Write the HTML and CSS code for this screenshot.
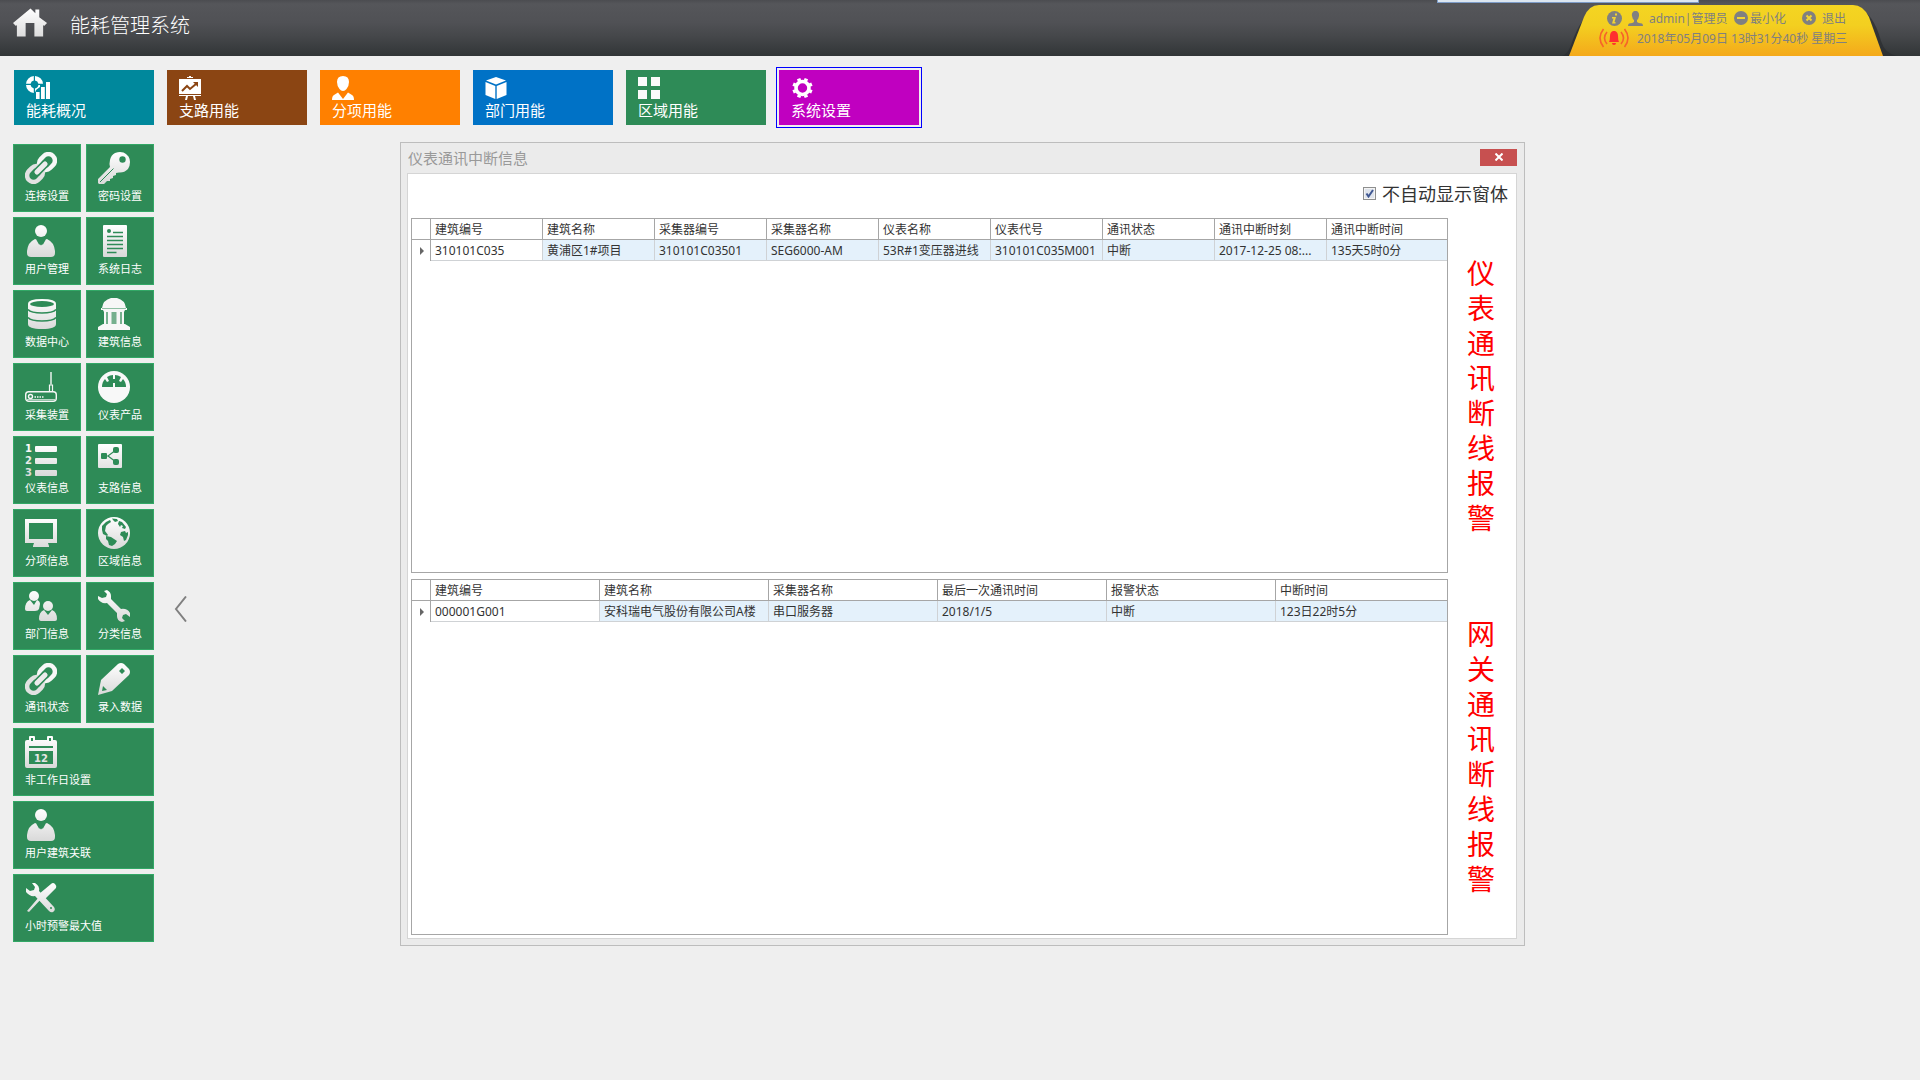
FILE: index.html
```
<!DOCTYPE html>
<html lang="zh-CN">
<head>
    <meta charset="UTF-8">
    <meta name="viewport" content="width=device-width, initial-scale=1.0">
    <title>能耗管理系统</title>
    <link rel="stylesheet" href="styles.css">
</head>
<body>
    <!-- shared gradient for the icons -->
    <svg class="defs" width="0" height="0" aria-hidden="true">
        <defs>
            <linearGradient id="silver" gradientUnits="userSpaceOnUse" x1="0" y1="0" x2="0" y2="32">
                <stop offset="0" stop-color="#ffffff"/>
                <stop offset="1" stop-color="#d9d9d9"/>
            </linearGradient>
            <symbol id="link" viewBox="0 0 32 32">
                <g transform="rotate(-45 16 16)" fill="none">
                    <rect x="16" y="9.500" width="17" height="13" rx="6.500" stroke="#f7f7f7" stroke-width="4.500"/>
                    <rect x="-1" y="9.500" width="17" height="13" rx="6.500" stroke="#e2e2e2" stroke-width="4.500"/>
                    <rect x="7" y="12.700" width="18" height="6.600" rx="3.300" fill="#ececec" stroke="#2e8b57" stroke-width="1.500"/>
                </g>
            </symbol>
            <symbol id="user" viewBox="0 0 32 32">
                <circle cx="16" cy="6" r="6"/>
                <path d="M10 14Q3 17 2 26V28Q2 32 6 32H26Q30 32 30 28V26Q29 17 22 14Q20.500 14 20 16L18 19.500H17L16 20.500L15 19.500H14L12 16Q11.500 14 10 14Z"/>
            </symbol>
        </defs>
    </svg>

    <header class="topbar">
        <svg class="home" viewBox="0 0 36 30" fill="url(#silver)">
            <path d="M18 0L23 5V1H27V9L35 15L32 18L31 17V29H22V15H13V29H4V17L3 18L0 15Z"/>
        </svg>
        <h1>能耗管理系统</h1>
        <div class="top-strip"></div>
        <div class="status">
            <svg class="status-bg" viewBox="0 0 335 51" preserveAspectRatio="none">
                <defs>
                    <linearGradient id="gold" x1="0" y1="0" x2="0" y2="1">
                        <stop offset="0" stop-color="#f4d522"/>
                        <stop offset="0.4" stop-color="#f3cf20"/>
                        <stop offset="1" stop-color="#f4a91b"/>
                    </linearGradient>
                </defs>
                <path fill="#2b2e30" opacity="0.75" d="M0 51Q6 49 9 40Q19 10 36 2H293Q311 6 319 36Q323 49 335 51Z"/>
                <path fill="url(#gold)" d="M7 51L22 12Q27 0 37 0H291Q301 0 307 12L321 51Z"/>
            </svg>
            <div class="status-row">
                <a href="#" class="user-link">
                    <svg width="15" height="15" viewBox="0 0 15 15"><circle cx="7.500" cy="7.500" r="7.500" fill="#808080"/><path d="M8 2.500H10V4.500H8ZM5 6H9L7.500 11H8.500V12.500H5L6.500 7.500H5Z" fill="#f2d433"/></svg>
                    <svg width="15" height="15" viewBox="0 0 15 15" fill="#808080"><path d="M7.500 0C10 0 11.500 2 11 5Q10.500 8 9 9V11Q10 12 14 12.500Q15 13 15 15H0Q0 13 1 12.500Q5 12 6 11V9Q4.500 8 4 5C3.500 2 5 0 7.500 0Z"/></svg>
                    <span>admin|管理员</span>
                </a>
                <button type="button" class="status-btn">
                    <svg width="14" height="14" viewBox="0 0 14 14"><circle cx="7" cy="7" r="7" fill="#808080"/><rect x="3" y="6" width="8" height="2" fill="#f2d433"/></svg>
                    <span>最小化</span>
                </button>
                <button type="button" class="status-btn exit">
                    <svg width="14" height="14" viewBox="0 0 14 14"><circle cx="7" cy="7" r="7" fill="#808080"/><path d="M4.500 4.500L9.500 9.500M9.500 4.500L4.500 9.500" stroke="#f2d433" stroke-width="2"/></svg>
                    <span>退出</span>
                </button>
            </div>
            <div class="status-row clock">
                <svg width="30" height="20" viewBox="0 0 30 20" fill="none" stroke="#f7622b" stroke-width="1.600">
                    <path d="M8 4Q3 10 8 16M4.500 1Q-2.500 10 4.500 19M22 4Q27 10 22 16M25.500 1Q32.500 10 25.500 19"/>
                    <path stroke="none" fill="#ff2f2f" d="M14 3H16Q19 4 19 8Q19 12 20 14H10Q11 12 11 8Q11 4 14 3ZM13 15H17Q17 17 15 17Q13 17 13 15Z"/>
                </svg>
                <span>2018年05月09日 13时31分40秒 星期三</span>
            </div>
        </div>
    </header>

    <nav class="modules">
        <button type="button" class="module teal">
            <svg viewBox="0 0 24 24" fill="#fff"><path d="M7.800 0A8.300 8.300 0 0 0 0 7.800H4.600A4 4 0 0 1 7.800 4.600ZM9 0A8.300 8.300 0 0 1 17 7.800H12.400A4 4 0 0 0 9 4.600ZM0 9A8.300 8.300 0 0 0 7.800 17V12.400A4 4 0 0 1 4.600 9ZM12.400 9H14V11L10 14L9 16.500V12.400A4 4 0 0 0 12.400 9Z"/><rect x="10" y="16" width="3.600" height="7"/><rect x="15" y="11" width="3.800" height="12"/><rect x="20" y="6" width="4" height="17"/></svg>
            <span>能耗概况</span>
        </button>
        <button type="button" class="module brown">
            <svg viewBox="0 0 24 24" fill="#fff"><path d="M10 0H12V1H14V2H8V1H10ZM0 3H22V18H0ZM0 19H22V20H0ZM7 20H9L8 24H6ZM14 20H16L17 24H15Z"/><path d="M3 15L8 10L11 13L17 8" fill="none" stroke="#8b4513" stroke-width="2"/><path d="M14 6H19V11Z" fill="#8b4513"/></svg>
            <span>支路用能</span>
        </button>
        <button type="button" class="module orange">
            <svg viewBox="0 0 24 24" fill="#fff"><path d="M11 0Q17 0 17 6Q17 10 14.500 13Q13 15 11 15Q9 15 7.500 13Q5 10 5 6Q5 0 11 0ZM0 24Q0 20 2 19L6 16.500L11 23L16 16.500L20 19Q22 20 22 24Z"/></svg>
            <span>分项用能</span>
        </button>
        <button type="button" class="module blue">
            <svg viewBox="0 0 24 24" fill="#fff"><path d="M11 1L21 4.500L11 8.500L1 4.500ZM0.500 6L10.300 10V23L0.500 19ZM21.500 6L11.700 10V23L21.500 19Z"/></svg>
            <span>部门用能</span>
        </button>
        <button type="button" class="module green">
            <svg viewBox="0 0 24 24" fill="#fafafa"><path d="M0 1H9V10H0ZM13 1H22V10H13ZM0 14H9V23H0ZM13 14H22V23H13Z"/></svg>
            <span>区域用能</span>
        </button>
        <button type="button" class="module purple active">
            <svg viewBox="0 0 24 24"><circle cx="11.500" cy="12" r="6.500" fill="none" stroke="#fff" stroke-width="3.600"/><path d="M14.400 5L15.400 2.600M18.500 9.100L20.900 8.100M18.500 14.900L20.900 15.900M14.400 19L15.400 21.400M8.600 19L7.600 21.400M4.500 14.900L2.100 15.900M4.500 9.100L2.100 8.100M8.600 5L7.600 2.600" stroke="#fff" stroke-width="3.600"/></svg>
            <span>系统设置</span>
        </button>
    </nav>

    <main class="workspace">
        <aside class="sidebar">
            <button type="button" class="tile">
                <svg viewBox="0 0 32 32"><use href="#link"/></svg>
                <span>连接设置</span>
            </button>
            <button type="button" class="tile">
                <svg viewBox="0 0 32 32"><path fill="url(#silver)" d="M17 1Q20 0 22 0Q26 0 28 2L30.500 4.500Q32 7 32 10Q32 14 30 17Q26 21 21 20.500L18 21V23L15 24V26L12 27V29H9L6 32H1L0 31V27L12 15Q11 12 12 8Q13 3 17 1Z"/><circle cx="24.500" cy="7.500" r="3.200" fill="#2e8b57"/><path d="M2 30L15.500 16.500" stroke="#2e8b57"/></svg>
                <span>密码设置</span>
            </button>
            <button type="button" class="tile">
                <svg viewBox="0 0 32 32" fill="url(#silver)"><use href="#user"/></svg>
                <span>用户管理</span>
            </button>
            <button type="button" class="tile">
                <svg viewBox="0 0 32 32"><rect x="5" width="24" height="32" rx="1" fill="url(#silver)"/><circle cx="11" cy="6" r="2" fill="#2e8b57"/><path d="M15 7.500H25M9 11.500H25M9 15.500H25M9 19.500H25M9 23.500H25M9 27.500H18.500" stroke="#2e8b57" stroke-width="1.600"/></svg>
                <span>系统日志</span>
            </button>
            <button type="button" class="tile">
                <svg viewBox="0 0 32 32"><path fill="url(#silver)" d="M3 6Q3 1 17 1Q31 1 31 6V26Q31 31 17 31Q3 31 3 26Z"/><ellipse cx="17" cy="6" rx="12" ry="3" fill="#2e8b57"/><path d="M3 11.500Q6 15 17 15Q28 15 31 11.500M3 19.500Q6 23 17 23Q28 23 31 19.500" fill="none" stroke="#2e8b57" stroke-width="1.600"/></svg>
                <span>数据中心</span>
            </button>
            <button type="button" class="tile">
                <svg viewBox="0 0 32 32" fill="#f7f7f7"><path d="M4 10Q5 2 13 0H19Q27 2 28 10ZM3 10H29V12H3ZM5 12H27L26 14V26H27L32 29V32H0V29L5 26H6V14Z"/><path d="M4 10.500H28" stroke="#8fc0a4"/><path fill="#76b08e" d="M8 14H10V26H8ZM13.500 14H18.500V26H13.500ZM22 14H24V26H22Z"/></svg>
                <span>建筑信息</span>
            </button>
            <button type="button" class="tile">
                <svg viewBox="0 0 32 32" fill="none" stroke="#f7f7f7"><rect x="0.700" y="20.700" width="30.600" height="9.600" rx="3" stroke-width="1.400"/><path d="M1 28.500H31" stroke="#b9d8c6"/><circle cx="5.500" cy="25.500" r="2" stroke-width="1.400"/><path d="M9.500 26H18.500" stroke-width="1.600" stroke-dasharray="1.500 1"/><path d="M24.500 20V14H27.500V20" stroke-width="1.200"/><path d="M26 1V14" stroke="#b9d8c6" stroke-width="2"/></svg>
                <span>采集装置</span>
            </button>
            <button type="button" class="tile">
                <svg viewBox="0 0 32 32"><circle cx="16" cy="16" r="16" fill="#f8f8f8"/><path fill="#2e8b57" d="M4 16Q4 11 7 8L9 11L11 10L9 6Q12 4 15 4V8H17V4Q20 4 23 6L21 10L23 11L25 8Q28 11 28 16H17V12H15V16Z"/></svg>
                <span>仪表产品</span>
            </button>
            <button type="button" class="tile">
                <svg viewBox="0 0 32 32" fill="url(#silver)"><rect x="10" y="2" width="22" height="6" rx="1"/><rect x="10" y="14" width="22" height="6" rx="1"/><rect x="10" y="26" width="22" height="6" rx="1"/><text class="digits" x="0" y="8">1</text><text class="digits" x="0" y="20">2</text><text class="digits" x="0" y="32">3</text></svg>
                <span>仪表信息</span>
            </button>
            <button type="button" class="tile">
                <svg viewBox="0 0 32 32"><rect width="24" height="24" rx="1" fill="url(#silver)"/><path d="M6 12H10L18 6M10 12L18 18" fill="none" stroke="#2e8b57" stroke-width="1.200"/><g fill="#2e8b57"><rect x="3" y="9" width="6" height="6" rx="1"/><rect x="15" y="3" width="6" height="6" rx="2"/><rect x="15" y="15" width="6" height="6" rx="2"/></g></svg>
                <span>支路信息</span>
            </button>
            <button type="button" class="tile">
                <svg viewBox="0 0 32 32" fill="url(#silver)"><path fill-rule="evenodd" d="M0 2H32V26H23L24 29V30H8V29L9 26H0ZM4 6V22H28V6Z"/></svg>
                <span>分项信息</span>
            </button>
            <button type="button" class="tile">
                <svg viewBox="0 0 32 32"><circle cx="16" cy="16" r="16" fill="url(#silver)"/><path fill="#2e8b57" d="M14 1.500L19 2L20 4L17 5L15 3ZM4 9L8 5L12 3L13 5L10 7L8 9L7 14L10 18L9 19L5 17L4 13ZM21 4L24 5L28 10L27 12L24 11L25 9L23 8L22 10L20 7ZM8 19L13 20L19 24L17 27L14 29L11 28L10 24L8 22ZM23 15L27 14L28 16L30 15V18L28 23L26 24L25 20L22 18Z"/></svg>
                <span>区域信息</span>
            </button>
            <button type="button" class="tile">
                <svg viewBox="0 0 32 32" fill="url(#silver)"><circle cx="9" cy="6" r="5"/><path d="M5 10L9 15L12 10Q15 11 15 14L14 19Q13 21 10 21H2Q0 21 0 19Q0 12 5 10Z"/><circle cx="23" cy="16" r="5"/><path d="M19 20L23 25L27 20Q32 22 32 29Q32 31 30 31H16Q14 31 14 29Q14 22 19 20Z"/></svg>
                <span>部门信息</span>
            </button>
            <button type="button" class="tile">
                <svg viewBox="0 0 32 32" fill="url(#silver)"><path d="M6 1L9 0Q13 2 13 6V9L23 19Q29 18 32 23V27L28 24L25 25L24 28L27 31L24 32Q19 31 19 26V23L9 13Q3 14 0 9V6L4 8L8 7L9 4Z"/></svg>
                <span>分类信息</span>
            </button>
            <button type="button" class="tile">
                <svg viewBox="0 0 32 32"><use href="#link"/></svg>
                <span>通讯状态</span>
            </button>
            <button type="button" class="tile">
                <svg viewBox="0 0 32 32"><path fill="url(#silver)" d="M20 1Q23 -1 26 1L31 6Q33 9 31 12L14 28L0 32L3 17Z"/><path fill="#2e8b57" d="M24 5L27 8L24 11L21 8ZM5 23L9 27L4 28Z"/></svg>
                <span>录入数据</span>
            </button>
            <button type="button" class="tile wide">
                <svg viewBox="0 0 32 32" fill="url(#silver)"><path fill-rule="evenodd" d="M4 1Q4 0 5 0H9Q10 0 10 1V4H22V1Q22 0 23 0H27Q28 0 28 1V4H30Q32 4 32 6V30Q32 32 30 32H2Q0 32 0 30V6Q0 4 2 4H4ZM6 2V5H8V2ZM24 2V5H26V2ZM4 15V28H28V15ZM4 10V12H28V10Z"/><text class="digits" x="9" y="26">12</text></svg>
                <span>非工作日设置</span>
            </button>
            <button type="button" class="tile wide">
                <svg viewBox="0 0 32 32" fill="url(#silver)"><use href="#user"/></svg>
                <span>用户建筑关联</span>
            </button>
            <button type="button" class="tile wide">
                <svg viewBox="0 0 32 32" fill="url(#silver)"><path d="M7 1H10Q15 4 14 9L29 25Q31 28 28 30Q26 31 24 29L10 14Q5 15 1 10V6L5 9L9 8L10 5Z"/><path d="M26 2Q28 0 30 2Q32 4 31 6L20 17L17 16L4 30L2 29L14 15V12Z"/><circle cx="26" cy="26" r="1" fill="#2e8b57"/></svg>
                <span>小时预警最大值</span>
            </button>
        </aside>

        <button type="button" class="collapse" aria-label="收起">
            <svg width="14" height="26" viewBox="0 0 14 26"><path d="M12 0.500L2 13L12 25.500" fill="none" stroke="#808080" stroke-width="2"/></svg>
        </button>

        <section class="dialog">
            <div class="dialog-title">
                <h2>仪表通讯中断信息</h2>
                <button type="button" class="close" aria-label="关闭">
                    <svg width="8" height="8" viewBox="0 0 8 8"><path d="M0.500 0.500L7.500 7.500M7.500 0.500L0.500 7.500" stroke="#fff" stroke-width="2"/></svg>
                </button>
            </div>
            <div class="dialog-body">
                <div class="toolbar">
                    <input type="checkbox" id="noPopup" checked>
                    <label for="noPopup">不自动显示窗体</label>
                </div>

                <div class="alarm">
                    <div class="grid">
                        <table class="meters">
                            <thead>
                                <tr><th class="mark"></th><th>建筑编号</th><th>建筑名称</th><th>采集器编号</th><th>采集器名称</th><th>仪表名称</th><th>仪表代号</th><th>通讯状态</th><th>通讯中断时刻</th><th class="last">通讯中断时间</th></tr>
                            </thead>
                            <tbody>
                                <tr><td class="mark"><i class="arrow"></i></td><td class="focus">310101C035</td><td>黄浦区1#项目</td><td>310101C03501</td><td>SEG6000-AM</td><td>53R#1变压器进线</td><td>310101C035M001</td><td>中断</td><td>2017-12-25 08:...</td><td>135天5时0分</td></tr>
                            </tbody>
                        </table>
                    </div>
                    <p class="alarm-name">仪表通讯断线报警</p>
                </div>

                <div class="alarm">
                    <div class="grid">
                        <table class="gateways">
                            <thead>
                                <tr><th class="mark"></th><th>建筑编号</th><th>建筑名称</th><th>采集器名称</th><th>最后一次通讯时间</th><th>报警状态</th><th class="last">中断时间</th></tr>
                            </thead>
                            <tbody>
                                <tr><td class="mark"><i class="arrow"></i></td><td class="focus">000001G001</td><td>安科瑞电气股份有限公司A楼</td><td>串口服务器</td><td>2018/1/5</td><td>中断</td><td>123日22时5分</td></tr>
                            </tbody>
                        </table>
                    </div>
                    <p class="alarm-name">网关通讯断线报警</p>
                </div>
            </div>
        </section>
    </main>
</body>
</html>
```
FILE: styles.css
```
* {
    box-sizing: border-box;
}
body {
    margin: 0;
    background-color: #efefef;
    color: #333;
    font-family: "Noto Sans", "Noto Sans CJK SC", sans-serif;
    font-size: 12px;
}
h1, h2, p {
    margin: 0;
    font-weight: normal;
}
button {
    font-family: inherit;
    border: none;
    padding: 0;
    cursor: pointer;
}
svg {
    display: block;
    flex: none;
}
.defs {
    position: absolute;
}

/* header */
.topbar {
    position: relative;
    display: flex;
    align-items: flex-start;
    height: 56px;
    padding-left: 13px;
    background: linear-gradient(#4b4c50, #55565a 4px, #505155 40%, #45474a 65%, #313537);
}
.home {
    width: 35px;
    height: 30px;
    margin-top: 8px;
}
h1 {
    margin: 11px 0 0 22px;
    color: #fff;
    font-size: 20px;
    font-weight: 300;
    line-height: 30px;
}
.top-strip {
    position: absolute;
    top: 0;
    right: 221px;
    width: 262px;
    height: 3px;
    background-color: #dce6f0;
    border: 1px solid #7d9cc8;
    border-top: none;
}
.status {
    position: relative;
    width: 335px;
    height: 51px;
    margin: 5px 23px 0 auto;
    padding: 4px 0 0 37px;
    color: #808080;
}
.status-bg {
    position: absolute;
    top: 0;
    left: 0;
    width: 100%;
    height: 100%;
}
.status-row {
    position: relative;
    display: flex;
    align-items: center;
    height: 18px;
    padding-left: 8px;
}
.status-row.clock {
    height: 22px;
    padding-left: 0;
    gap: 8px;
}
.user-link {
    display: flex;
    align-items: center;
    gap: 6px;
    width: 127px;
    color: inherit;
    text-decoration: none;
}
.status-btn {
    display: flex;
    align-items: center;
    gap: 2px;
    width: 68px;
    background: none;
    color: inherit;
    font-size: 12px;
}
.status-btn.exit {
    gap: 6px;
}

/* modules */
.modules {
    display: flex;
    gap: 13px;
    padding: 14px 14px 19px;
}
.module {
    width: 140px;
    height: 55px;
    padding: 5px 12px;
    color: #fff;
    font-size: 15px;
    line-height: 20px;
    text-align: left;
}
.module svg {
    width: 24px;
    height: 24px;
}
.module span {
    display: block;
}
.module.active {
    outline: 1px solid #00f;
    outline-offset: 2px;
}
.teal { background-color: #00889c; }
.brown { background-color: #8b4513; }
.orange { background-color: #ff8000; }
.blue { background-color: #0072c6; }
.green { background-color: #2e8b57; }
.purple { background-color: #c000c0; }

/* sidebar */
.workspace {
    display: flex;
    align-items: flex-start;
    padding: 0 395px 0 13px;
}
.sidebar {
    flex: none;
    display: grid;
    grid-template-columns: 68px 68px;
    gap: 5px;
}
.tile {
    height: 68px;
    padding: 7px 11px;
    border: 1px solid #32a866;
    background-color: #2e8b57;
    color: #fff;
    font-size: 11px;
    line-height: 16px;
    text-align: left;
    white-space: nowrap;
}
.tile svg {
    width: 32px;
    height: 32px;
    overflow: visible;
}
.tile span {
    display: block;
    margin-top: 4px;
}
.tile.wide {
    grid-column: span 2;
}
.digits {
    font: bold 10px "DejaVu Sans", sans-serif;
}
.collapse {
    flex: none;
    align-self: center;
    margin: 128px 212px 0 20px;
    background: none;
}

/* dialog */
.dialog {
    flex: 1;
    min-width: 0;
    margin-top: -2px;
    padding: 0 7px 6px 6px;
    border: 1px solid #bdbdbd;
    background-color: #ebebeb;
}
.dialog-title {
    display: flex;
    align-items: center;
    justify-content: space-between;
    height: 30px;
    padding-bottom: 2px;
}
h2 {
    padding-left: 1px;
    color: #999;
    font-size: 15px;
}
.close {
    display: flex;
    align-items: center;
    justify-content: center;
    width: 37px;
    height: 17px;
    background-color: #c75050;
}
.dialog-body {
    display: flex;
    flex-direction: column;
    gap: 6px;
    padding: 0 0 3px 3px;
    border: 1px solid #d5d5d5;
    background-color: #fff;
}
.toolbar {
    display: flex;
    align-items: center;
    justify-content: flex-end;
    gap: 6px;
    height: 38px;
    padding-right: 8px;
    font-size: 18px;
}
.toolbar input {
    appearance: none;
    width: 13px;
    height: 13px;
    margin: 0;
    border: 1px solid #8e8f8f;
    background: #dfe4ec url("data:image/svg+xml,%3Csvg xmlns='http://www.w3.org/2000/svg' viewBox='0 0 11 11'%3E%3Cpath d='M2.500 5.500L4.500 8.500L9 2' fill='none' stroke='%233f5791' stroke-width='2'/%3E%3C/svg%3E");
    box-shadow: inset 0 0 0 1px #f4f4f4;
}
.alarm {
    display: flex;
    align-items: stretch;
}
.grid {
    flex: 1;
    min-width: 0;
    min-height: 355px;
    border: 1px solid #a6a6a6;
}
.alarm:last-child .grid {
    min-height: 356px;
}
table {
    width: 100%;
    table-layout: fixed;
    border-spacing: 0;
}
th, td {
    height: 21px;
    padding: 2px 0 0 4px;
    border-right: 1px solid #a6a6a6;
    border-bottom: 1px solid #a6a6a6;
    font-weight: normal;
    line-height: 18px;
    text-align: left;
    white-space: nowrap;
    overflow: hidden;
}
td {
    border-color: #cfd2d5;
    background-color: #e4f1fb;
}
td.focus {
    background-color: #fff;
}
th:last-child, td:last-child {
    border-right: none;
}
.meters th {
    width: 112px;
}
.gateways th {
    width: 169px;
}
table .mark {
    width: 19px;
    padding: 0 0 0 8px;
}
table .last {
    width: auto;
}
td.mark {
    border-right-color: #a6a6a6;
    border-bottom: none;
    background-color: #fff;
}
.arrow {
    display: block;
    width: 0;
    border: 4px solid transparent;
    border-left-color: #666;
    border-right: none;
}
.alarm-name {
    flex: none;
    align-self: center;
    width: 28px;
    margin: 0 21px 0 19px;
    color: #f00;
    font-size: 28px;
    line-height: 35px;
}
```
